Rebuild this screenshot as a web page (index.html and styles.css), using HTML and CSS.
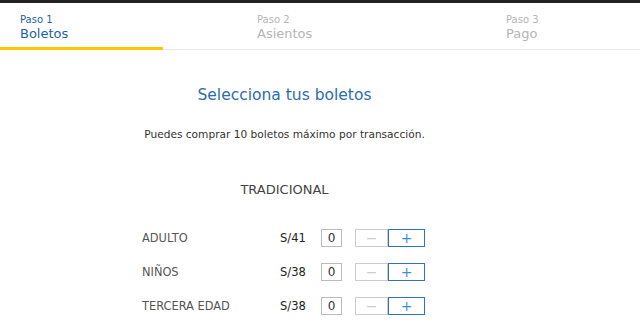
FILE: index.html
```html
<!DOCTYPE html>
<html lang="es">
<head>
<meta charset="utf-8">
<link rel="stylesheet" href="styles.css">
</head>
<body>
<div class="topbar"></div>
<nav class="steps">
  <div class="step step-1 active"><span class="step-num">Paso 1</span><span class="step-name">Boletos</span></div>
  <div class="step step-2"><span class="step-num">Paso 2</span><span class="step-name">Asientos</span></div>
  <div class="step step-3"><span class="step-num">Paso 3</span><span class="step-name">Pago</span></div>
</nav>
<div class="track"><div class="fill"></div></div>
<main class="content">
  <h1 class="title">Selecciona tus boletos</h1>
  <p class="note">Puedes comprar 10 boletos máximo por transacción.</p>
  <h2 class="category">TRADICIONAL</h2>
  <div class="rows">
    <div class="row">
      <span class="label">ADULTO</span>
      <span class="price">S/41</span>
      <span class="qty">0</span>
      <div class="stepper"><button class="btn minus">−</button><button class="btn plus">+</button></div>
    </div>
    <div class="row">
      <span class="label">NIÑOS</span>
      <span class="price">S/38</span>
      <span class="qty">0</span>
      <div class="stepper"><button class="btn minus">−</button><button class="btn plus">+</button></div>
    </div>
    <div class="row">
      <span class="label">TERCERA EDAD</span>
      <span class="price">S/38</span>
      <span class="qty">0</span>
      <div class="stepper"><button class="btn minus">−</button><button class="btn plus">+</button></div>
    </div>
  </div>
</main>
</body>
</html>
```
FILE: styles.css
```css
* { box-sizing: border-box; }
body {
  margin: 0;
  font-family: "DejaVu Sans", sans-serif;
  color: #333;
  background: #fff;
}
.topbar { height: 3px; background: #222; }
.steps {
  display: flex;
  height: 44px;
  padding-top: 10px;
}
.step { display: flex; flex-direction: column; color: #b5b5b5; }
.step-1 { width: 257px; padding-left: 20px; }
.step-2 { width: 249px; }
.step-num { font-size: 10px; line-height: 13px; }
.step-name { font-size: 13px; line-height: 16px; }
.step.active { color: #1f5fa3; }
.track {
  height: 3px;
  background: linear-gradient(to top, #e8e8e8 1px, transparent 1px);
}
.fill { width: 163px; height: 3px; background: #ffc600; }
.content {
  margin-left: 142px;
  width: 285px;
}
.title {
  margin: 35px 0 0;
  text-align: center;
  font-size: 15.5px;
  line-height: 20px;
  font-weight: normal;
  color: #2b6cb0;
}
.note {
  margin: 22px 0 0;
  display: flex;
  justify-content: center;
  white-space: nowrap;
  font-size: 10.6px;
  line-height: 14px;
}
.category {
  margin: 41px 0 0;
  text-align: center;
  font-size: 13px;
  line-height: 16px;
  font-weight: normal;
  color: #444;
}
.rows { margin-top: 31px; display: flex; flex-direction: column; gap: 16px; }
.row { display: flex; align-items: center; height: 18px; }
.label { width: 138px; font-size: 11.4px; color: #555; }
.price { width: 41px; font-size: 11.5px; color: #222; }
.qty {
  width: 21px; height: 18px;
  border: 1px solid #bbb;
  font-size: 12px; line-height: 16px;
  text-align: center;
  color: #333;
}
.stepper { display: flex; margin-left: 13px; }
.btn {
  width: 33px; height: 18px;
  padding: 0;
  background: #fff;
  font-family: inherit;
  font-size: 14px;
  line-height: 16px;
}
.minus { border: 1px solid #ccc; color: #ccc; }
.plus { width: 37px; border: 1px solid #2f72c0; color: #3a8fd8; }
```
